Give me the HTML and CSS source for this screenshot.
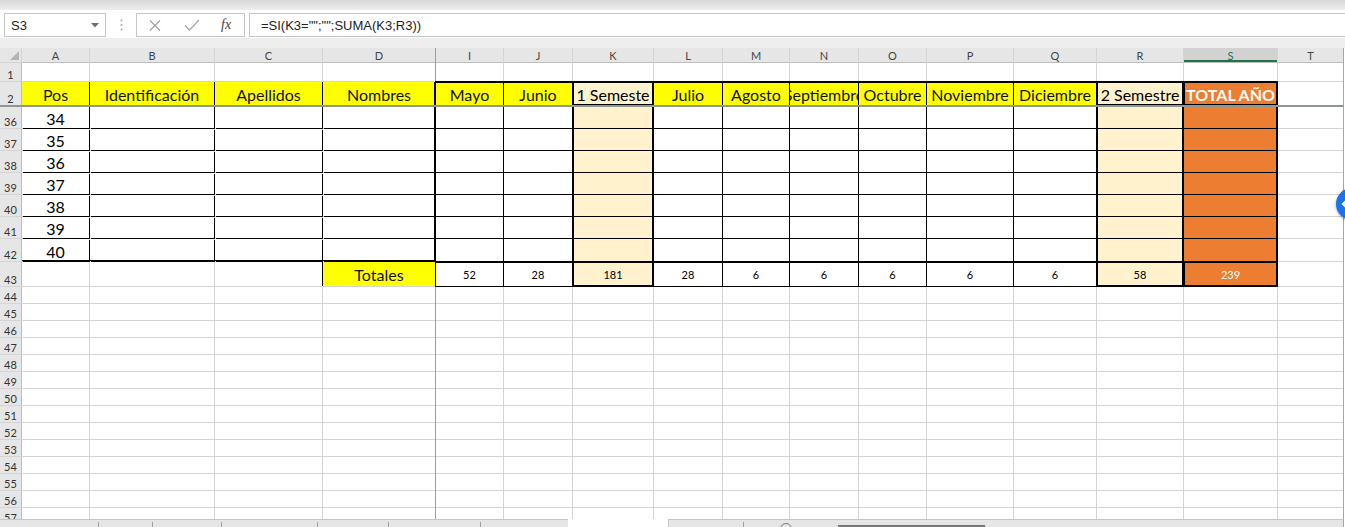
FILE: index.html
```html
<!DOCTYPE html>
<html lang="es">
<head>
  <meta charset="UTF-8" />
  <title>Notas - Excel</title>
  <link rel="stylesheet" href="styles.css">
</head>
<body>
<div class="app">
  <div class="ribbon-edge"></div>

  <!-- barra de fórmulas -->
  <div class="fbar">
    <div class="namebox">
      <span>S3</span>
      <svg width="8" height="5" viewBox="0 0 8 5"><polygon points="0,0 8,0 4,4.5" fill="#707070"/></svg>
    </div>
    <div class="grip">
      <svg width="3" height="12" viewBox="0 0 3 12"><circle cx="1.5" cy="1.5" r="1" fill="#a8a8a8"/><circle cx="1.5" cy="6" r="1" fill="#a8a8a8"/><circle cx="1.5" cy="10.5" r="1" fill="#a8a8a8"/></svg>
    </div>
    <div class="fbtns">
      <svg class="ic-x" width="12" height="11" viewBox="0 0 12 11"><path d="M1 0.5 L11 10.5 M11 0.5 L1 10.5" stroke="#a0a0a0" stroke-width="1.2" fill="none"/></svg>
      <svg class="ic-ok" width="16" height="12" viewBox="0 0 16 12"><path d="M1 6.5 L5.5 11 L15 1" stroke="#a8a8a8" stroke-width="1.3" fill="none"/></svg>
      <span class="fx">fx</span>
    </div>
    <div class="formula">=SI(K3="";"";SUMA(K3;R3))</div>
  </div>

  <div class="gapbar"></div>

  <!-- hoja -->
  <div class="sheet">
    <div class="row colhead">
      <span class="corner"><svg width="9" height="9" viewBox="0 0 9 9"><polygon points="9,0 9,9 0,9" fill="#b4b4b4"/></svg></span>
      <span class="ch">A</span><span class="ch">B</span><span class="ch">C</span><span class="ch">D</span>
      <span class="ch">I</span><span class="ch">J</span><span class="ch">K</span><span class="ch">L</span><span class="ch">M</span><span class="ch">N</span>
      <span class="ch">O</span><span class="ch">P</span><span class="ch">Q</span><span class="ch">R</span><span class="ch sel">S</span><span class="ch">T</span>
    </div>

    <div class="row r1">
      <span class="rh">1</span><span></span><span></span><span></span><span></span><span></span><span></span><span></span><span></span><span></span><span></span><span></span><span></span><span></span><span></span><span></span><span></span>
    </div>

    <div class="row r2">
      <span class="rh">2</span>
      <span class="yl">Pos</span><span class="yl">Identificación</span><span class="yl">Apellidos</span><span class="yl end">Nombres</span>
      <span class="mh">Mayo</span><span class="mh">Junio</span><span class="semh">1 Semeste</span>
      <span class="mh">Julio</span><span class="mh">Agosto</span><span class="mh">Septiembre</span><span class="mh">Octubre</span><span class="mh">Noviembre</span><span class="mh">Diciembre</span>
      <span class="semh">2 Semestre</span><span class="toth">TOTAL AÑO</span><span></span>
    </div>

    <div class="row data r36">
      <span class="rh">36</span><span class="ln">34</span><span class="ln"></span><span class="ln"></span><span class="ln end"></span>
      <span class="bx"></span><span class="bx"></span><span class="sem"></span><span class="bx"></span><span class="bx"></span><span class="bx"></span><span class="bx"></span><span class="bx"></span><span class="bx"></span><span class="sem"></span><span class="tot"></span><span></span>
    </div>
    <div class="row data">
      <span class="rh">37</span><span class="ln">35</span><span class="ln"></span><span class="ln"></span><span class="ln end"></span>
      <span class="bx"></span><span class="bx"></span><span class="sem"></span><span class="bx"></span><span class="bx"></span><span class="bx"></span><span class="bx"></span><span class="bx"></span><span class="bx"></span><span class="sem"></span><span class="tot"></span><span></span>
    </div>
    <div class="row data">
      <span class="rh">38</span><span class="ln">36</span><span class="ln"></span><span class="ln"></span><span class="ln end"></span>
      <span class="bx"></span><span class="bx"></span><span class="sem"></span><span class="bx"></span><span class="bx"></span><span class="bx"></span><span class="bx"></span><span class="bx"></span><span class="bx"></span><span class="sem"></span><span class="tot"></span><span></span>
    </div>
    <div class="row data">
      <span class="rh">39</span><span class="ln">37</span><span class="ln"></span><span class="ln"></span><span class="ln end"></span>
      <span class="bx"></span><span class="bx"></span><span class="sem"></span><span class="bx"></span><span class="bx"></span><span class="bx"></span><span class="bx"></span><span class="bx"></span><span class="bx"></span><span class="sem"></span><span class="tot"></span><span></span>
    </div>
    <div class="row data">
      <span class="rh">40</span><span class="ln">38</span><span class="ln"></span><span class="ln"></span><span class="ln end"></span>
      <span class="bx"></span><span class="bx"></span><span class="sem"></span><span class="bx"></span><span class="bx"></span><span class="bx"></span><span class="bx"></span><span class="bx"></span><span class="bx"></span><span class="sem"></span><span class="tot"></span><span></span>
    </div>
    <div class="row data">
      <span class="rh">41</span><span class="ln">39</span><span class="ln"></span><span class="ln"></span><span class="ln end"></span>
      <span class="bx"></span><span class="bx"></span><span class="sem"></span><span class="bx"></span><span class="bx"></span><span class="bx"></span><span class="bx"></span><span class="bx"></span><span class="bx"></span><span class="sem"></span><span class="tot"></span><span></span>
    </div>
    <div class="row data r42">
      <span class="rh">42</span><span class="ln last">40</span><span class="ln last"></span><span class="ln last"></span><span class="ln end last"></span>
      <span class="bx"></span><span class="bx"></span><span class="sem"></span><span class="bx"></span><span class="bx"></span><span class="bx"></span><span class="bx"></span><span class="bx"></span><span class="bx"></span><span class="sem"></span><span class="tot"></span><span></span>
    </div>

    <div class="row r43">
      <span class="rh">43</span><span></span><span></span><span></span><span class="lbl">Totales</span>
      <span class="sm">52</span><span class="sm">28</span><span class="sm semk">181</span><span class="sm">28</span><span class="sm">6</span><span class="sm">6</span><span class="sm">6</span><span class="sm">6</span><span class="sm">6</span>
      <span class="sm semk">58</span><span class="sm totk">239</span><span></span>
    </div>

    <div class="row empty"><span class="rh">44</span><span></span><span></span><span></span><span></span><span></span><span></span><span></span><span></span><span></span><span></span><span></span><span></span><span></span><span></span><span></span><span></span></div>
    <div class="row empty"><span class="rh">45</span><span></span><span></span><span></span><span></span><span></span><span></span><span></span><span></span><span></span><span></span><span></span><span></span><span></span><span></span><span></span><span></span></div>
    <div class="row empty"><span class="rh">46</span><span></span><span></span><span></span><span></span><span></span><span></span><span></span><span></span><span></span><span></span><span></span><span></span><span></span><span></span><span></span><span></span></div>
    <div class="row empty"><span class="rh">47</span><span></span><span></span><span></span><span></span><span></span><span></span><span></span><span></span><span></span><span></span><span></span><span></span><span></span><span></span><span></span><span></span></div>
    <div class="row empty"><span class="rh">48</span><span></span><span></span><span></span><span></span><span></span><span></span><span></span><span></span><span></span><span></span><span></span><span></span><span></span><span></span><span></span><span></span></div>
    <div class="row empty"><span class="rh">49</span><span></span><span></span><span></span><span></span><span></span><span></span><span></span><span></span><span></span><span></span><span></span><span></span><span></span><span></span><span></span><span></span></div>
    <div class="row empty"><span class="rh">50</span><span></span><span></span><span></span><span></span><span></span><span></span><span></span><span></span><span></span><span></span><span></span><span></span><span></span><span></span><span></span><span></span></div>
    <div class="row empty"><span class="rh">51</span><span></span><span></span><span></span><span></span><span></span><span></span><span></span><span></span><span></span><span></span><span></span><span></span><span></span><span></span><span></span><span></span></div>
    <div class="row empty"><span class="rh">52</span><span></span><span></span><span></span><span></span><span></span><span></span><span></span><span></span><span></span><span></span><span></span><span></span><span></span><span></span><span></span><span></span></div>
    <div class="row empty"><span class="rh">53</span><span></span><span></span><span></span><span></span><span></span><span></span><span></span><span></span><span></span><span></span><span></span><span></span><span></span><span></span><span></span><span></span></div>
    <div class="row empty"><span class="rh">54</span><span></span><span></span><span></span><span></span><span></span><span></span><span></span><span></span><span></span><span></span><span></span><span></span><span></span><span></span><span></span><span></span></div>
    <div class="row empty"><span class="rh">55</span><span></span><span></span><span></span><span></span><span></span><span></span><span></span><span></span><span></span><span></span><span></span><span></span><span></span><span></span><span></span><span></span></div>
    <div class="row empty"><span class="rh">56</span><span></span><span></span><span></span><span></span><span></span><span></span><span></span><span></span><span></span><span></span><span></span><span></span><span></span><span></span><span></span><span></span></div>
    <div class="row empty"><span class="rh">57</span><span></span><span></span><span></span><span></span><span></span><span></span><span></span><span></span><span></span><span></span><span></span><span></span><span></span><span></span><span></span><span></span></div>

    <!-- línea de inmovilizar paneles -->
    <div class="freeze"></div>
  </div>

  <!-- pestañas / barra de desplazamiento -->
  <div class="status">
    <div class="tabs"><span></span><span></span><span></span><span></span><span></span><span></span><span></span></div>
    <div class="hscroll">
      <span class="hs-sep"></span>
      <span class="hs-dot"></span>
      <span class="hs-thumb"></span>
    </div>
  </div>

  <div class="fab">
    <svg width="14" height="14" viewBox="0 0 14 14"><path d="M9 2 L4 7 L9 12" stroke="#fff" stroke-width="2.2" fill="none"/></svg>
  </div>
</div>
</body>
</html>
```

FILE: styles.css
```css
* { box-sizing: border-box; }
body {
  margin: 0;
  background: #e6e6e6;
  font-family: Lato, "Noto Sans", sans-serif;
  overflow: hidden;
}
.app {
  position: relative;
  width: 1345px;
  height: 527px;
  display: flex;
  flex-direction: column;
  background: #fff;
}
.ribbon-edge {
  height: 10px;
  background: linear-gradient(#d6d6d6, #eeeeee);
}

/* formula bar */
.fbar {
  height: 28px;
  display: flex;
  padding-top: 3px;
  background: #fff;
  font-family: "Liberation Sans", Arial, sans-serif;
}
.namebox {
  margin-left: 4px;
  width: 102px;
  height: 24px;
  border: 1px solid #c6c6c6;
  display: flex;
  align-items: center;
  justify-content: space-between;
  padding: 0 6px 0 6px;
  font-size: 13px;
  color: #222;
}
.grip {
  width: 30px;
  height: 24px;
  display: flex;
  align-items: center;
  justify-content: center;
}
.fbtns {
  width: 109px;
  height: 24px;
  border: 1px solid #c6c6c6;
  display: flex;
  align-items: center;
  padding-left: 12px;
}
.ic-ok { margin-left: 23px; }
.fx {
  margin-left: 21px;
  font-family: "Liberation Serif", serif;
  font-style: italic;
  font-size: 14px;
  color: #444;
}
.formula {
  flex: 1;
  margin-left: 4px;
  height: 24px;
  border: 1px solid #c6c6c6;
  border-right: none;
  padding-left: 11px;
  display: flex;
  align-items: center;
  font-size: 13px;
  color: #222;
}
.gapbar {
  height: 10px;
  background: #eeeeee;
}

/* sheet */
.sheet {
  position: relative;
  width: 1344px;
  height: 471px;
  overflow: hidden;
  display: flex;
  flex-direction: column;
  gap: 1px;
  border-right: 1px solid #a6a6a6;
  background: linear-gradient(#9c9c9c, #9c9c9c) 435px 0 / 1px 100% no-repeat, #d4d4d4;
}
.row {
  display: grid;
  grid-template-columns: 21px 67px 124px 107px 112px 67px 68px 80px 68px 66px 68px 67px 86px 82px 86px 93px 65px;
  column-gap: 1px;
  flex-shrink: 0;
}
.row > * {
  background: #fff;
  display: flex;
  align-items: flex-end;
  justify-content: center;
  overflow: hidden;
  white-space: nowrap;
  font-size: 16px;
  color: #000;
}
.colhead { height: 14px; }
.r1 { height: 18px; }
.r2 { height: 23px; }
.data { height: 21px; }
.r36, .r42 { height: 22px; }
.r43 { height: 24px; }
.empty { height: 16px; }

.corner {
  background: #e6e6e6;
  align-items: flex-end;
  justify-content: flex-end;
  padding: 0 2px 2px 0;
}
.ch {
  background: #e6e6e6;
  align-items: center;
  font-size: 11px;
  color: #444;
  box-shadow: 0 1px #bdbdbd;
}
.ch.sel {
  background: #d2d2d2;
  color: #217346;
  box-shadow: 0 1px #bdbdbd, inset 0 -2px #217346;
}
.rh {
  background: #e6e6e6;
  font-size: 11px;
  color: #333;
  box-shadow: 1px 0 #bdbdbd;
}

/* header row 2 */
.yl {
  background: #ffff00;
  color: #111;
  padding-bottom: 1px;
  box-shadow: 1px 0 #000;
}
.yl.end { box-shadow: 1px 0 #000, inset -1px 0 #000; }
.mh {
  background: #ffff00;
  color: #111;
  padding-bottom: 1px;
  box-shadow: 0 0 0 1px #000, inset 0 1px #000;
}
.semh {
  background: #fff2cc;
  padding-bottom: 1px;
  box-shadow: 0 0 0 1px #000, inset 0 0 0 1px #000;
}
.toth {
  background: #ed7d31;
  color: #fff;
  font-weight: bold;
  padding-bottom: 1px;
  box-shadow: 0 0 0 1px #000, inset 0 0 0 1px #000;
}

/* data rows */
.ln { box-shadow: 1px 1px #000; }
.ln.end { box-shadow: 1px 1px #000, inset -1px 0 #000; }
.ln.last { box-shadow: 1px 1px #000, inset 0 -1px #000; }
.ln.end.last { box-shadow: 1px 1px #000, inset -1px -1px #000; }
.bx { box-shadow: 0 0 0 1px #000; }
.sem {
  background: #fff2cc;
  box-shadow: 0 0 0 1px #000, inset 1px 0 #000, inset -1px 0 #000;
}
.tot {
  background: #ed7d31;
  box-shadow: 0 0 0 1px #000, inset -1px 0 #000;
}

/* totals row */
.lbl {
  background: #ffff00;
  color: #111;
  padding-bottom: 2px;
  box-shadow: -1px 0 #000;
}
.sm {
  align-items: center;
  font-size: 11px;
  box-shadow: 0 0 0 1px #000, inset 0 1px #000;
}
.sm.semk {
  background: #fff2cc;
  box-shadow: 0 0 0 1px #000, inset 0 0 0 1px #000;
}
.sm.totk {
  background: #ed7d31;
  color: #fff;
  box-shadow: 0 0 0 1px #000, inset 0 0 0 1px #000;
}

.freeze {
  position: absolute;
  left: 0;
  top: 57px;
  width: 1343px;
  height: 2px;
  background: #8d9891;
}

/* bottom bar */
.status {
  height: 8px;
  display: flex;
  background: #fff;
}
.tabs {
  width: 568px;
  display: grid;
  grid-template-columns: 99px 54px 69px 96px 71px 92px 87px;
  background: #e6e6e6;
  border-top: 1px solid #c6c6c6;
}
.tabs span {
  margin-top: 2px;
  border-right: 1px solid #9e9e9e;
}
.tabs span:last-child { border-right: none; }
.hscroll {
  position: relative;
  margin-left: 100px;
  width: 676px;
  display: flex;
  background: #e6e6e6;
  border-top: 1px solid #c6c6c6;
  border-left: 1px solid #c6c6c6;
  border-right: 1px solid #a6a6a6;
}
.hs-sep {
  width: 75px;
  margin-top: 2px;
  border-right: 1px solid #9e9e9e;
}
.hs-dot {
  margin: 3px 0 0 36px;
  width: 12px;
  height: 12px;
  border: 1px solid #7a7a7a;
  border-radius: 50%;
}
.hs-thumb {
  margin: 5px 0 0 46px;
  width: 147px;
  height: 4px;
  border-top: 2px solid #777;
  background: #d0d0d0;
}

.fab {
  position: absolute;
  left: 1336px;
  top: 188px;
  width: 32px;
  height: 32px;
  border-radius: 50%;
  background: #1a73e8;
  box-shadow: 0 1px 3px rgba(0,0,0,0.35);
  display: flex;
  align-items: center;
  padding-left: 3px;
}
```
